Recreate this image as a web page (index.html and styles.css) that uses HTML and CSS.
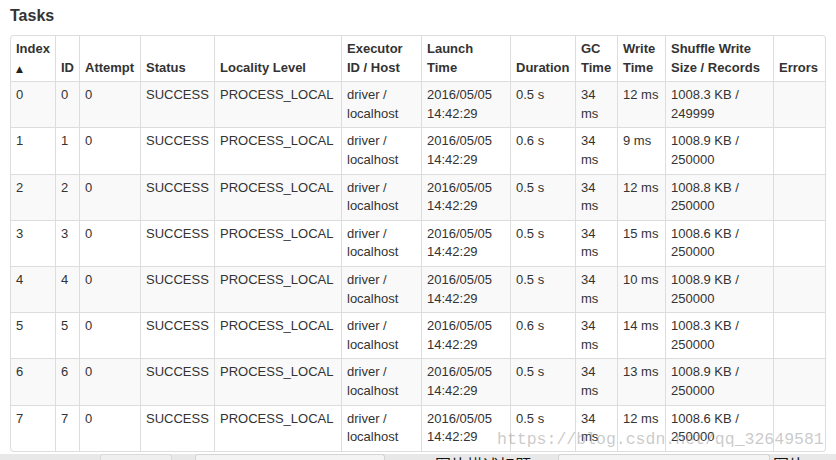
FILE: index.html
```html
<!DOCTYPE html>
<html>
<head>
<meta charset="utf-8">
<link rel="stylesheet" href="styles.css">
</head>
<body>
<div class="page">
  <h4 class="title">Tasks</h4>
  <table class="tasks">
    <colgroup>
      <col class="c-index"><col class="c-id"><col class="c-attempt"><col class="c-status"><col class="c-locality"><col class="c-exec"><col class="c-launch"><col class="c-duration"><col class="c-gc"><col class="c-write"><col class="c-shuffle"><col class="c-errors">
    </colgroup>
    <thead>
      <tr>
        <th>Index <span class="arrow">&#x25B2;</span></th>
        <th>ID</th>
        <th>Attempt</th>
        <th>Status</th>
        <th>Locality Level</th>
        <th>Executor ID / Host</th>
        <th>Launch Time</th>
        <th>Duration</th>
        <th>GC Time</th>
        <th>Write Time</th>
        <th>Shuffle Write Size / Records</th>
        <th>Errors</th>
      </tr>
    </thead>
    <tbody>
      <tr><td>0</td><td>0</td><td>0</td><td>SUCCESS</td><td>PROCESS_LOCAL</td><td>driver / localhost</td><td>2016/05/05 14:42:29</td><td>0.5 s</td><td>34 ms</td><td>12 ms</td><td>1008.3 KB / 249999</td><td></td></tr>
      <tr><td>1</td><td>1</td><td>0</td><td>SUCCESS</td><td>PROCESS_LOCAL</td><td>driver / localhost</td><td>2016/05/05 14:42:29</td><td>0.6 s</td><td>34 ms</td><td>9 ms</td><td>1008.9 KB / 250000</td><td></td></tr>
      <tr><td>2</td><td>2</td><td>0</td><td>SUCCESS</td><td>PROCESS_LOCAL</td><td>driver / localhost</td><td>2016/05/05 14:42:29</td><td>0.5 s</td><td>34 ms</td><td>12 ms</td><td>1008.8 KB / 250000</td><td></td></tr>
      <tr><td>3</td><td>3</td><td>0</td><td>SUCCESS</td><td>PROCESS_LOCAL</td><td>driver / localhost</td><td>2016/05/05 14:42:29</td><td>0.5 s</td><td>34 ms</td><td>15 ms</td><td>1008.6 KB / 250000</td><td></td></tr>
      <tr><td>4</td><td>4</td><td>0</td><td>SUCCESS</td><td>PROCESS_LOCAL</td><td>driver / localhost</td><td>2016/05/05 14:42:29</td><td>0.5 s</td><td>34 ms</td><td>10 ms</td><td>1008.9 KB / 250000</td><td></td></tr>
      <tr><td>5</td><td>5</td><td>0</td><td>SUCCESS</td><td>PROCESS_LOCAL</td><td>driver / localhost</td><td>2016/05/05 14:42:29</td><td>0.6 s</td><td>34 ms</td><td>14 ms</td><td>1008.3 KB / 250000</td><td></td></tr>
      <tr><td>6</td><td>6</td><td>0</td><td>SUCCESS</td><td>PROCESS_LOCAL</td><td>driver / localhost</td><td>2016/05/05 14:42:29</td><td>0.5 s</td><td>34 ms</td><td>13 ms</td><td>1008.9 KB / 250000</td><td></td></tr>
      <tr><td>7</td><td>7</td><td>0</td><td>SUCCESS</td><td>PROCESS_LOCAL</td><td>driver / localhost</td><td>2016/05/05 14:42:29</td><td>0.5 s</td><td>34 ms</td><td>12 ms</td><td>1008.6 KB / 250000</td><td></td></tr>
    </tbody>
  </table>
  <div class="strip">
    <div class="seg s1"></div>
    <div class="seg s2"></div>
    <div class="seg s3"></div>
    <div class="seg s4"></div>
    <div class="seg s5"></div>
    <div class="seg s6"><span class="cut">图片描述标题</span></div>
    <div class="seg s7"></div>
    <div class="seg s8"></div>
    <div class="seg s9"><span class="cut">图片</span></div>
    <div class="seg s10"></div>
  </div>
  <div class="watermark">https://blog.csdn.net/qq_32649581</div>
</div>
</body>
</html>
```

FILE: styles.css
```css
html, body {
  margin: 0;
  padding: 0;
  background: #fff;
}
body {
  font-family: "Liberation Sans", Arial, sans-serif;
  color: #333;
  font-size: 13px;
}
.page {
  position: relative;
  width: 836px;
  height: 460px;
  overflow: hidden;
  padding-top: 6px;
  box-sizing: border-box;
}
.title {
  margin: 0 0 9px 10px;
  font-size: 16px;
  line-height: 20px;
  font-weight: bold;
  color: #333;
}
.tasks {
  margin-left: 10px;
  width: 815px;
  table-layout: fixed;
  border-collapse: separate;
  border-spacing: 0;
  border: 1px solid #ddd;
  border-left: 0;
  border-radius: 4px;
}
.c-index { width: 45px; }
.c-id { width: 24px; }
.c-attempt { width: 61px; }
.c-status { width: 74px; }
.c-locality { width: 127px; }
.c-exec { width: 80px; }
.c-launch { width: 89px; }
.c-duration { width: 65px; }
.c-gc { width: 42px; }
.c-write { width: 48px; }
.c-shuffle { width: 108px; }
.c-errors { width: 52px; }

.tasks th, .tasks td {
  padding: 4px 5px;
  line-height: 18.6px;
  text-align: left;
  border-left: 1px solid #ddd;
  border-top: 1px solid #ddd;
  font-size: 13px;
}
.tasks th {
  vertical-align: bottom;
  font-weight: bold;
  border-top: 0;
}
.tasks td {
  vertical-align: top;
}
.tasks tbody tr:nth-child(odd) td {
  background: #f9f9f9;
}
.tasks thead th:first-child {
  border-top-left-radius: 4px;
}
.tasks thead th:last-child {
  border-top-right-radius: 4px;
}
.tasks tbody tr:last-child td:first-child {
  border-bottom-left-radius: 4px;
}
.tasks tbody tr:last-child td:last-child {
  border-bottom-right-radius: 4px;
}
.arrow {
  font-family: "DejaVu Sans", sans-serif;
  font-weight: normal;
  font-size: 9px;
  line-height: 0;
  color: #222;
}
.strip {
  display: flex;
  margin-top: 2px;
  height: 10px;
  background: #e9e9e9;
}
.seg {
  height: 10px;
  overflow: hidden;
  box-sizing: border-box;
}
.s1 { width: 100px; background: #e8e8e8; }
.s2 { width: 72px; background: #efefef; border-top: 1px solid #dadada; border-left: 1px solid #dadada; border-right: 1px solid #dadada; border-radius: 3px 3px 0 0; }
.s3 { width: 23px; background: #e8e8e8; }
.s4 { width: 190px; background: #f4f4f4; border-top: 1px solid #d4d4d4; border-left: 1px solid #d4d4d4; border-right: 1px solid #d4d4d4; border-radius: 3px 3px 0 0; }
.s5 { width: 50px; background: #e8e8e8; }
.s6 { width: 98px; background: #e8e8e8; }
.s7 { width: 25px; background: #e8e8e8; }
.s8 { width: 212px; background: #f4f4f4; border-top: 1px solid #d4d4d4; border-left: 1px solid #d4d4d4; border-right: 1px solid #d4d4d4; border-radius: 3px 3px 0 0; }
.s9 { width: 40px; background: #e8e8e8; padding-left: 3px; }
.s10 { flex: 1; background: #e8e8e8; }
.cut {
  display: block;
  font-family: "Noto Sans CJK SC", sans-serif;
  font-size: 16px;
  line-height: 16px;
  color: #111;
  white-space: nowrap;
  margin-top: 2px;
}
.watermark {
  position: absolute;
  left: 497px;
  top: 430px;
  font-family: "Liberation Mono", monospace;
  font-size: 16.5px;
  line-height: 20px;
  color: rgba(150, 150, 150, 0.5);
  white-space: nowrap;
}
```
